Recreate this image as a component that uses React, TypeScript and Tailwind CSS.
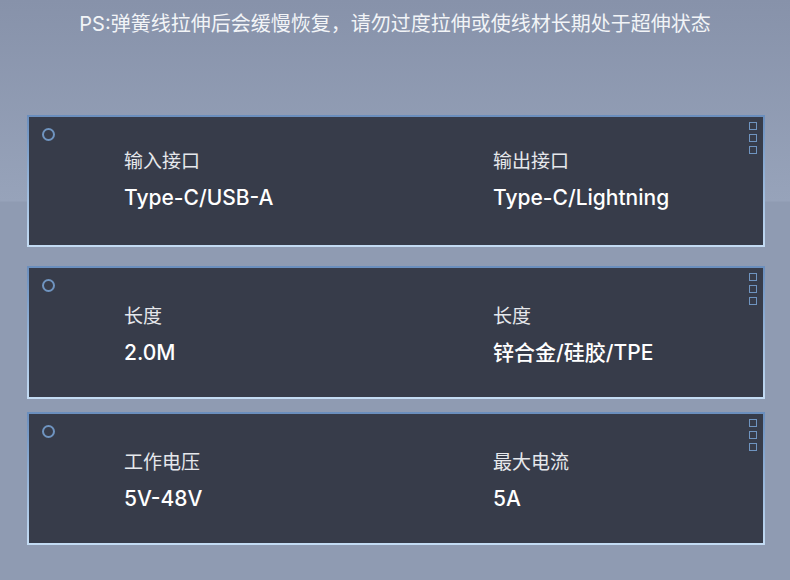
import React from 'react';

interface Spec {
  label: string;
  value: string;
}

interface CardData {
  left: Spec;
  right: Spec;
}

const cards: CardData[] = [
  { left: { label: '输入接口', value: 'Type-C/USB-A' }, right: { label: '输出接口', value: 'Type-C/Lightning' } },
  { left: { label: '长度', value: '2.0M' }, right: { label: '长度', value: '锌合金/硅胶/TPE' } },
  { left: { label: '工作电压', value: '5V-48V' }, right: { label: '最大电流', value: '5A' } },
];

const SpecCell: React.FC<{ spec: Spec }> = ({ spec }) => (
  <div className="flex flex-col">
    <span className="text-[19px] leading-[24px] text-[#e6e8ec] font-normal">{spec.label}</span>
    <span className="mt-[10px] text-[21px] leading-[28px] text-white font-medium">{spec.value}</span>
  </div>
);

const Card: React.FC<{ data: CardData; className: string; pad: string }> = ({ data, className, pad }) => (
  <div className={`ml-[27px] w-[738px] p-[2px] bg-gradient-to-b from-[#6a8ebd] to-[#c4dcf4] ${className}`}>
    <div className="relative h-full w-full bg-[#373c4a]">
      {/* dot top-left */}
      <div className="absolute left-[13px] top-[11px] w-[13px] h-[13px] rounded-full border-2 border-[#6f94c0]" />
      {/* three squares top-right */}
      <div className="absolute right-[6px] top-[5px] flex flex-col gap-[4px]">
        <div className="w-[8px] h-[8px] border-[1.5px] border-[#6f94c0]" />
        <div className="w-[8px] h-[8px] border-[1.5px] border-[#6f94c0]" />
        <div className="w-[8px] h-[8px] border-[1.5px] border-[#6f94c0]" />
      </div>
      <div className={`grid grid-cols-[369px_1fr] pl-[95px] ${pad}`}>
        <SpecCell spec={data.left} />
        <SpecCell spec={data.right} />
      </div>
    </div>
  </div>
);

export default function App() {
  return (
    <div
      className="w-[790px] h-[580px] overflow-hidden bg-[linear-gradient(to_bottom,#8792aa_0px,#97a3ba_201px,#8f9bb2_202px,#8f9bb2_100%)]"
      style={{ fontFamily: '"Inter", "Noto Sans CJK SC", sans-serif' }}
    >
      <div className="pt-[10px] text-center text-[20px] leading-[28px] text-[#f2f4f7]">
        PS:弹簧线拉伸后会缓慢恢复，请勿过度拉伸或使线材长期处于超伸状态
      </div>
      <Card data={cards[0]} className="mt-[77px] h-[132px]" pad="pt-[33px]" />
      <Card data={cards[1]} className="mt-[19px] h-[133px]" pad="pt-[37px]" />
      <Card data={cards[2]} className="mt-[13px] h-[133px]" pad="pt-[37px]" />
    </div>
  );
}
